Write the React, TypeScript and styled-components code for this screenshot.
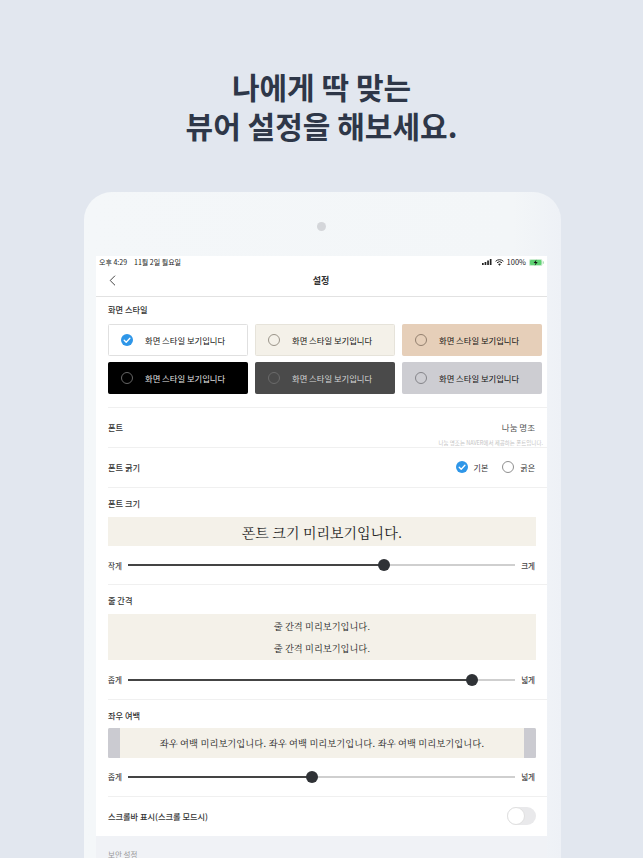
import React from "react";
import styled, { createGlobalStyle } from "styled-components";

const Global = createGlobalStyle`
  html, body { margin: 0; padding: 0; height: 858px; overflow: hidden; background: #e2e7ef; }
  body { font-family: "Noto Sans CJK KR", "Noto Sans", sans-serif; color: #222; }
  * { box-sizing: border-box; }
`;

const Page = styled.div`
  width: 643px;
  height: 858px;
  overflow: hidden;
  background: #e2e7ef;
`;
const Hero = styled.h1`
  margin: 0;
  padding-top: 67px;
  height: 192px;
  text-align: center;
  font-size: 30px;
  line-height: 39px;
  font-weight: 700;
  color: #2e3748;
`;
const Device = styled.div`
  width: 477px;
  height: 700px;
  margin-left: 84px;
  padding: 30px 14px 0 12px;
  border-radius: 28px 28px 0 0;
  background: linear-gradient(90deg, #f4f7f9, #f3f6f8 90%, #eef1f6);
`;
const Camera = styled.div`
  width: 9px;
  height: 9px;
  margin: 0 auto 25px;
  border-radius: 50%;
  background: #d4d6da;
`;
const Screen = styled.div`
  background: #fff;
`;
const StatusBar = styled.div`
  height: 12px;
  padding: 0 3px;
  display: flex;
  align-items: center;
  justify-content: space-between;
  font-size: 7px;
  line-height: 12px;
  color: #222;
`;
const StatusLeft = styled.div`
  display: flex;
  gap: 7px;
`;
const StatusRight = styled.div`
  display: flex;
  align-items: center;
  gap: 3px;
  font-size: 7.5px;
`;
const Nav = styled.div`
  height: 29px;
  border-bottom: 1px solid #e2e2e2;
  display: grid;
  grid-template-columns: 1fr auto 1fr;
  align-items: center;
  padding: 0 0 3px 13px;
`;
const NavTitle = styled.div`
  font-size: 9px;
  font-weight: 700;
  color: #333;
  transform: translateX(-7px);
`;
const Section = styled.section<{ $h: number }>`
  margin-left: 12px;
  height: ${(p) => p.$h}px;
  border-bottom: 1px solid #f0f0f0;
  padding-right: 11px;
`;
const SectionTitle = styled.div<{ $top: number }>`
  padding-top: ${(p) => p.$top}px;
  height: ${(p) => p.$top + 13}px;
  font-size: 8.2px;
  line-height: 13px;
  font-weight: 500;
  color: #333;
`;
const CardGrid = styled.div`
  display: grid;
  grid-template-columns: repeat(3, 140px);
  gap: 6px 7px;
  margin-top: 8px;
  width: 434px;
`;
const Card = styled.div<{ $bg: string; $fg: string; $border: string }>`
  height: 32px;
  padding-left: 12px;
  display: flex;
  align-items: center;
  gap: 12px;
  border-radius: 1.5px;
  border: 1px solid ${(p) => p.$border};
  background: ${(p) => p.$bg};
  color: ${(p) => p.$fg};
  font-size: 8.3px;
  font-weight: 400;
  white-space: nowrap;
`;
const Circle = styled.span<{ $c?: string }>`
  width: 12px;
  height: 12px;
  flex: none;
  border-radius: 50%;
  border: 1px solid ${(p) => p.$c || "#9a9a9a"};
`;
const Row = styled.div`
  display: flex;
  align-items: center;
  justify-content: space-between;
  height: 39px;
  padding: 0 1px 1px 0;
`;
const RowLabel = styled.div`
  font-size: 8.2px;
  font-weight: 500;
  color: #333;
  white-space: nowrap;
`;
const FontValue = styled.div`
  font-size: 8.5px;
  color: #555;
`;
const FontRow = styled(Row)`
  position: relative;
`;
const Note = styled.div`
  position: absolute;
  right: -7px;
  bottom: 0;
  font-size: 5.5px;
  line-height: 8px;
  color: #c4c4c4;
  white-space: nowrap;
`;
const Options = styled.div`
  display: flex;
  align-items: center;
`;
const Option = styled.div`
  display: flex;
  align-items: center;
  gap: 6px;
  margin-left: 14px;
  font-size: 8px;
  color: #333;
`;
const OptionCircle = styled.span`
  width: 12px;
  height: 12px;
  border-radius: 50%;
  border: 1px solid #8f8f8f;
`;
const Preview = styled.div<{ $h: number; $size: number }>`
  height: ${(p) => p.$h}px;
  margin-top: 7px;
  width: 428px;
  background: #f4f1e9;
  color: #222;
  font-family: "Noto Serif CJK KR", "Noto Sans CJK KR", serif;
  font-size: ${(p) => p.$size}px;
  display: flex;
  flex-direction: column;
  align-items: center;
  justify-content: center;
  white-space: nowrap;
`;
const SpacedLine = styled.div`
  line-height: 22px;
`;
const MarginPreview = styled(Preview)`
  flex-direction: row;
  justify-content: space-between;
  margin-top: 6px;
  border-radius: 1.5px;
  overflow: hidden;
`;
const Gutter = styled.span`
  width: 12px;
  align-self: stretch;
  background: #cbcbd1;
`;
const SliderRow = styled.div<{ $h: number }>`
  height: ${(p) => p.$h}px;
  width: 427px;
  display: flex;
  align-items: center;
  justify-content: space-between;
  font-size: 7.5px;
  font-weight: 500;
  color: #444;
`;
const Track = styled.div`
  position: relative;
  width: 387px;
  height: 2px;
  background: #cfcfcf;
`;
const Fill = styled.div`
  height: 100%;
  background: #444;
`;
const Thumb = styled.span`
  position: absolute;
  top: -5px;
  width: 12px;
  height: 12px;
  margin-left: -6px;
  border-radius: 50%;
  background: #2f3236;
`;
const SwitchRow = styled(Row)`
  padding-right: 0;
  width: 428px;
`;
const Toggle = styled.div`
  width: 29px;
  height: 18px;
  border-radius: 9px;
  background: #e9e9eb;
`;
const Knob = styled.div`
  width: 18px;
  height: 18px;
  border-radius: 50%;
  background: #fff;
  border: 1px solid #e0e0e0;
`;
const Footer = styled.div`
  height: 30px;
  background: #f0f2f6;
  padding: 14px 0 0 12px;
  font-size: 7.5px;
  line-height: 10px;
  color: #999;
`;
const LastSection = styled.div`
  margin-left: 12px;
`;

const Check = ({ size = 12 }: { size?: number }) => (
  <svg width={size} height={size} viewBox="0 0 12 12" style={{ flex: "none" }}>
    <circle cx="6" cy="6" r="6" fill="#2e96e8" />
    <path d="M3.2 6.2l2 2 3.7-4" fill="none" stroke="#fff" strokeWidth="1.3" strokeLinecap="round" strokeLinejoin="round" />
  </svg>
);

const Signal = () => (
  <svg width="10" height="6" viewBox="0 0 10 6">
    <rect x="0" y="4" width="1.7" height="2" fill="#222" />
    <rect x="2.6" y="3" width="1.7" height="3" fill="#222" />
    <rect x="5.2" y="1.5" width="1.7" height="4.5" fill="#222" />
    <rect x="7.8" y="0" width="1.7" height="6" fill="#222" />
  </svg>
);
const Wifi = () => (
  <svg width="9" height="7" viewBox="0 0 9 7">
    <path d="M.6 2.3a5.6 5.6 0 0 1 7.8 0M2 3.8a3.6 3.6 0 0 1 5 0" fill="none" stroke="#222" strokeWidth="1" />
    <path d="M4.5 6.8L3.1 5.3a2 2 0 0 1 2.8 0z" fill="#222" />
  </svg>
);
const Battery = () => (
  <svg width="15" height="7" viewBox="0 0 15 7">
    <rect x="0" y="0" width="13.4" height="7" rx="1.6" fill="#c9eccf" />
    <rect x="1" y="1" width="11.4" height="5" rx="1" fill="#5fd273" />
    <rect x="13.8" y="2.2" width="1" height="2.6" rx=".5" fill="#9fdca8" />
    <path d="M7.6 0.4L4.6 3.9h2l-.9 2.8 3-3.6H6.7z" fill="#111" />
  </svg>
);
const Back = () => (
  <svg width="7" height="11" viewBox="0 0 7 11">
    <path d="M6 .7L1.2 5.5 6 10.3" fill="none" stroke="#444" strokeWidth="1" />
  </svg>
);

const cards = [
  { bg: "#fff", fg: "#111", border: "#e0e0e0", circle: "", check: true },
  { bg: "#f4f1e9", fg: "#111", border: "#e6e3da", circle: "#9a9489" },
  { bg: "#e6cfb9", fg: "#111", border: "#e6cfb9", circle: "#93806f" },
  { bg: "#000", fg: "#e6e6e6", border: "#000", circle: "#666" },
  { bg: "#4a4a4a", fg: "#d6d6d6", border: "#4a4a4a", circle: "#6a6a6a" },
  { bg: "#cdcdd2", fg: "#111", border: "#cdcdd2", circle: "#85858a" },
];

const Slider = ({ left, right, pct, h }: { left: string; right: string; pct: number; h: number }) => (
  <SliderRow $h={h}>
    <span>{left}</span>
    <Track>
      <Fill style={{ width: `${pct}%` }} />
      <Thumb style={{ left: `${pct}%` }} />
    </Track>
    <span>{right}</span>
  </SliderRow>
);

export default function App() {
  const margin = "좌우 여백 미리보기입니다. ";
  return (
    <Page>
      <Global />
      <Hero>
        나에게 딱 맞는
        <br />
        뷰어 설정을 해보세요.
      </Hero>
      <Device>
        <Camera />
        <Screen>
          <StatusBar>
            <StatusLeft>
              <span>오후 4:29</span>
              <span>11월 2일 월요일</span>
            </StatusLeft>
            <StatusRight>
              <Signal />
              <Wifi />
              <span>100%</span>
              <Battery />
            </StatusRight>
          </StatusBar>
          <Nav>
            <Back />
            <NavTitle>설정</NavTitle>
          </Nav>
          <Section $h={111}>
            <SectionTitle $top={6}>화면 스타일</SectionTitle>
            <CardGrid>
              {cards.map((c, i) => (
                <Card key={i} $bg={c.bg} $fg={c.fg} $border={c.border}>
                  {c.check ? <Check /> : <Circle $c={c.circle} />}
                  화면 스타일 보기입니다
                </Card>
              ))}
            </CardGrid>
          </Section>
          <Section $h={40}>
            <FontRow>
              <RowLabel>폰트</RowLabel>
              <FontValue>나눔 명조</FontValue>
              <Note>나눔 명조는 NAVER에서 제공하는 폰트입니다.</Note>
            </FontRow>
          </Section>
          <Section $h={40}>
            <Row>
              <RowLabel>폰트 굵기</RowLabel>
              <Options>
                <Option>
                  <Check />
                  기본
                </Option>
                <Option>
                  <OptionCircle />
                  굵은
                </Option>
              </Options>
            </Row>
          </Section>
          <Section $h={97}>
            <SectionTitle $top={9}>폰트 크기</SectionTitle>
            <Preview $h={29} $size={14}>
              폰트 크기 미리보기입니다.
            </Preview>
            <Slider left="작게" right="크게" pct={66.2} h={38} />
          </Section>
          <Section $h={115}>
            <SectionTitle $top={9}>줄 간격</SectionTitle>
            <Preview $h={46} $size={9.2}>
              <SpacedLine>줄 간격 미리보기입니다.</SpacedLine>
              <SpacedLine>줄 간격 미리보기입니다.</SpacedLine>
            </Preview>
            <Slider left="좁게" right="넓게" pct={89} h={39} />
          </Section>
          <Section $h={97}>
            <SectionTitle $top={9}>좌우 여백</SectionTitle>
            <MarginPreview $h={30} $size={9.3}>
              <Gutter />
              <span>{margin + margin + margin.trim()}</span>
              <Gutter />
            </MarginPreview>
            <Slider left="좁게" right="넓게" pct={47.5} h={37} />
          </Section>
          <LastSection>
            <SwitchRow>
              <RowLabel>스크롤바 표시(스크롤 모드시)</RowLabel>
              <Toggle>
                <Knob />
              </Toggle>
            </SwitchRow>
          </LastSection>
        </Screen>
        <Footer>보안 설정</Footer>
      </Device>
    </Page>
  );
}
